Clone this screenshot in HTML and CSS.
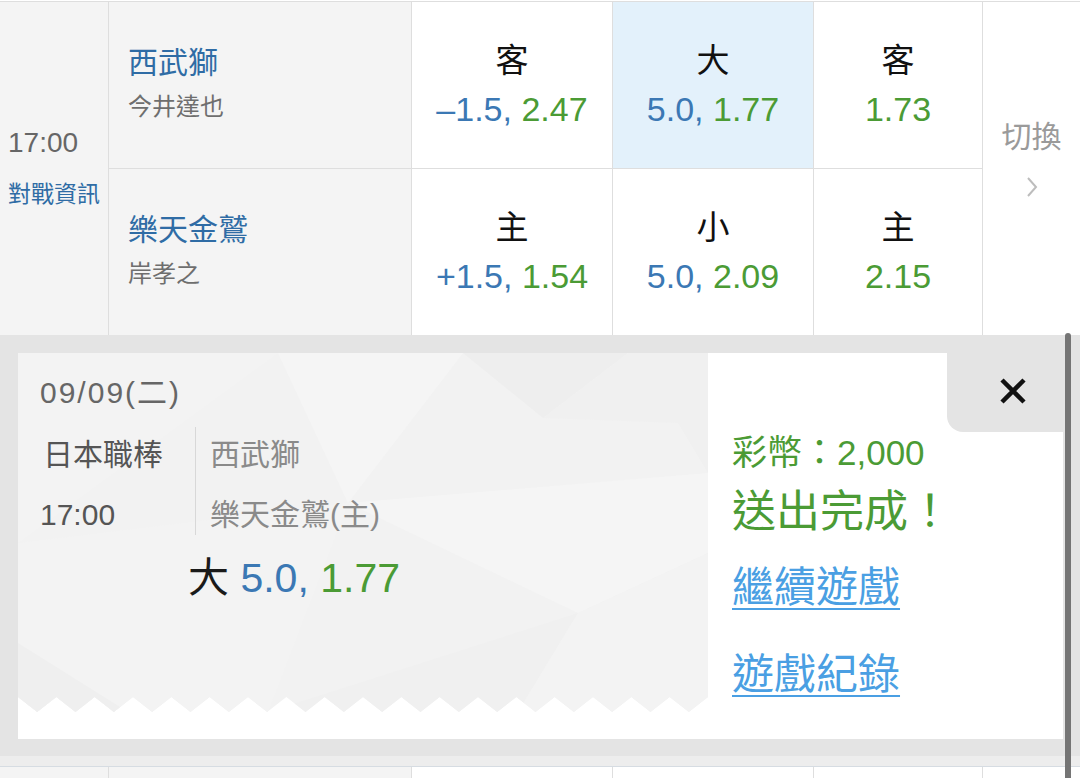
FILE: index.html
```html
<!DOCTYPE html>
<html lang="zh-Hant">
<head>
<meta charset="utf-8">
<title>投注</title>
<link rel="stylesheet" href="styles.css">
</head>
<body>
<div class="board">
  <div class="match">
    <div class="cell time">
      <div class="time-val">17:00</div>
      <a class="info">對戰資訊</a>
    </div>
    <div class="cell team">
      <div class="team-name">西武獅</div>
      <div class="pitcher">今井達也</div>
    </div>
    <div class="cell odds">
      <div class="label">客</div>
      <div class="val"><span class="blue">–1.5,</span> <span class="green">2.47</span></div>
    </div>
    <div class="cell odds sel">
      <div class="label">大</div>
      <div class="val"><span class="blue">5.0,</span> <span class="green">1.77</span></div>
    </div>
    <div class="cell odds">
      <div class="label">客</div>
      <div class="val"><span class="green">1.73</span></div>
    </div>
    <div class="cell switch">
      <div class="switch-text">切換</div>
      <svg class="chev" width="12" height="22" viewBox="0 0 12 22"><polyline points="2,2 10,11 2,20" fill="none" stroke="#bdbdbd" stroke-width="2"/></svg>
    </div>
    <div class="cell team">
      <div class="team-name">樂天金鷲</div>
      <div class="pitcher">岸孝之</div>
    </div>
    <div class="cell odds">
      <div class="label">主</div>
      <div class="val"><span class="blue">+1.5,</span> <span class="green">1.54</span></div>
    </div>
    <div class="cell odds">
      <div class="label">小</div>
      <div class="val"><span class="blue">5.0,</span> <span class="green">2.09</span></div>
    </div>
    <div class="cell odds">
      <div class="label">主</div>
      <div class="val"><span class="green">2.15</span></div>
    </div>
  </div>

  <div class="bet-panel">
    <div class="card">
      <div class="ticket">
        <svg class="ticket-bg" viewBox="0 0 690 359" preserveAspectRatio="none">
          <defs>
            <clipPath id="zig">
              <path d="M0 0 H690 V344 L670.83 359 L651.67 344 L632.5 359 L613.33 344 L594.17 359 L575 344 L555.83 359 L536.67 344 L517.5 359 L498.33 344 L479.17 359 L460 344 L440.83 359 L421.67 344 L402.5 359 L383.33 344 L364.17 359 L345 344 L325.83 359 L306.67 344 L287.5 359 L268.33 344 L249.17 359 L230 344 L210.83 359 L191.67 344 L172.5 359 L153.33 344 L134.17 359 L115 344 L95.83 359 L76.67 344 L57.5 359 L38.33 344 L19.17 359 L0 344 Z"/>
            </clipPath>
          </defs>
          <g clip-path="url(#zig)">
            <rect width="690" height="359" fill="#f2f2f2"/>
            <polygon points="0,0 260,0 0,190" fill="#f3f3f3"/>
            <polygon points="260,0 445,0 330,150" fill="#f5f5f5"/>
            <polygon points="445,0 610,0 525,65" fill="#eeeeee"/>
            <polygon points="525,65 610,0 690,0 690,120 660,70" fill="#f0f0f0"/>
            <polygon points="0,190 330,150 250,359 0,359" fill="#f3f3f3"/>
            <polygon points="330,150 690,120 690,200 560,260" fill="#f5f5f5"/>
            <polygon points="250,359 560,260 500,359" fill="#f0f0f0"/>
            <polygon points="560,260 690,200 690,359 500,359" fill="#f3f3f3"/>
            <polygon points="0,290 110,359 0,359" fill="#efefef"/>
          </g>
        </svg>
        <div class="ticket-body">
          <div class="date">09/09(二)</div>
          <div class="info-row">
            <div class="league">
              <div class="line">日本職棒</div>
              <div class="line">17:00</div>
            </div>
            <div class="divider"></div>
            <div class="teams">
              <div class="line">西武獅</div>
              <div class="line">樂天金鷲(主)</div>
            </div>
          </div>
          <div class="pick"><span class="pick-label">大</span> <span class="blue">5.0,</span> <span class="green">1.77</span></div>
        </div>
      </div>
      <div class="result">
        <div class="close">
          <svg width="28" height="28" viewBox="0 0 28 28"><path d="M3 3 L25 25 M25 3 L3 25" stroke="#111" stroke-width="4.5" stroke-linecap="butt"/></svg>
        </div>
        <div class="coins">彩幣：2,000</div>
        <div class="done">送出完成！</div>
        <a class="link first">繼續遊戲</a>
        <a class="link second">遊戲紀錄</a>
      </div>
    </div>
  </div>

  <div class="match next">
    <div class="cell time"></div>
    <div class="cell team"></div>
    <div class="cell odds"></div>
    <div class="cell odds"></div>
    <div class="cell odds"></div>
    <div class="cell switch"></div>
  </div>
</div>
<div class="scrollbar"></div>
</body>
</html>
```

FILE: styles.css
```css
* {
  box-sizing: border-box;
  margin: 0;
  padding: 0;
}

html, body {
  overflow: hidden;
  background: #ffffff;
}

body {
  width: 1080px;
  height: 778px;
  position: relative;
  font-family: "Liberation Sans", "Noto Sans CJK TC", sans-serif;
  color: #222;
}

.board {
  padding-top: 1px;
}

.match {
  display: grid;
  grid-template-columns: 108px 302px 200px 200px 168px 97px;
  grid-template-rows: 166px 166px;
  gap: 1px;
  background: #dedede;
  border-top: 1px solid #dedede;
}

.match.next {
  grid-template-rows: 166px;
  border-top: 1px solid #d6dce2;
}

.cell {
  background: #ffffff;
}

.time {
  grid-row: span 2;
  background: #f4f4f4;
  display: flex;
  flex-direction: column;
  justify-content: center;
  padding-left: 8px;
}

.match.next .time,
.match.next .switch {
  grid-row: span 1;
}

.time-val {
  font-size: 28px;
  line-height: 40px;
  color: #666;
}

.info {
  font-size: 23px;
  line-height: 40px;
  margin-top: 11px;
  color: #2f6ca5;
}

.team {
  background: #f4f4f4;
  display: flex;
  flex-direction: column;
  justify-content: center;
  padding-left: 19px;
}

.team-name {
  font-size: 30px;
  line-height: 40px;
  color: #2f6ca5;
}

.pitcher {
  font-size: 24px;
  line-height: 40px;
  margin-top: 4px;
  color: #6e6e6e;
}

.odds {
  display: flex;
  flex-direction: column;
  justify-content: center;
  align-items: center;
}

.odds.sel {
  background: #e3f1fb;
}

.label {
  font-size: 33px;
  line-height: 48px;
  color: #111;
}

.val {
  font-size: 34px;
  line-height: 48px;
  white-space: nowrap;
}

.blue {
  color: #3b78b4;
}

.green {
  color: #4b9b35;
}

.switch {
  grid-column: 6;
  grid-row: span 2;
  display: flex;
  flex-direction: column;
  justify-content: center;
  align-items: center;
  padding-bottom: 20px;
}

.switch-text {
  font-size: 30px;
  line-height: 36px;
  color: #9a9a9a;
}

.chev {
  margin-top: 21px;
  display: block;
}

/* bet result panel */
.bet-panel {
  background: #e4e4e4;
  padding: 18px 17px 17px 18px;
  border-bottom: 10px solid #ededed;
}

.card {
  display: flex;
  height: 386px;
  background: #ffffff;
}

.ticket {
  position: relative;
  width: 690px;
  height: 359px;
  flex: none;
}

.ticket-bg {
  position: absolute;
  left: 0;
  top: 0;
  width: 100%;
  height: 100%;
}

.ticket-body {
  position: relative;
  padding: 20px 0 0 22px;
}

.date {
  font-size: 30px;
  line-height: 40px;
  letter-spacing: 2px;
  color: #666;
}

.info-row {
  display: flex;
  margin-top: 12px;
}

.league {
  width: 155px;
  color: #555;
}

.line {
  font-size: 30px;
  line-height: 60px;
  white-space: nowrap;
}

.league .line:first-child {
  padding-left: 3px;
}

.divider {
  width: 1px;
  background: #d8d8d8;
  margin: 2px 0 10px;
}

.teams {
  padding-left: 14px;
  color: #8a8a8a;
}

.pick {
  margin-top: 8px;
  margin-left: 148px;
  font-size: 41px;
  line-height: 50px;
  white-space: nowrap;
}

.pick-label {
  color: #1a1a1a;
}

.result {
  flex: 1;
  display: flex;
  flex-direction: column;
  align-items: flex-start;
  padding-left: 24px;
}

.close {
  align-self: flex-end;
  width: 116px;
  height: 79px;
  background: #e4e4e4;
  border-bottom-left-radius: 16px;
  display: flex;
  align-items: center;
  justify-content: center;
  padding: 0 0 4px 16px;
}

.close svg {
  display: block;
}

.coins {
  font-size: 35px;
  line-height: 42px;
  color: #4b9b35;
  white-space: nowrap;
}

.done {
  font-size: 44px;
  line-height: 56px;
  margin-top: 10px;
  color: #4b9b35;
  white-space: nowrap;
}

.link {
  font-size: 42px;
  line-height: 56px;
  color: #4a9fe3;
  text-decoration: underline;
  text-decoration-thickness: 2px;
  text-underline-offset: 6px;
  white-space: nowrap;
}

.link.first {
  margin-top: 20px;
}

.link.second {
  margin-top: 31px;
}

.scrollbar {
  position: absolute;
  left: 1065px;
  top: 333px;
  width: 6px;
  height: 450px;
  background: #757575;
  border-radius: 3px;
}
```
